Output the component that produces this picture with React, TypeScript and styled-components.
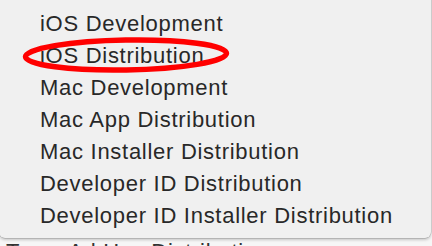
import React from "react";
import styled, { createGlobalStyle } from "styled-components";

const Global = createGlobalStyle`
  html, body { margin: 0; padding: 0; background: #f6f6f6; overflow: hidden; }
  body { width: 432px; height: 246px; font-family: "Liberation Sans", Arial, sans-serif; }
`;

const Page = styled.div`
  position: relative;
  width: 432px;
  height: 246px;
  overflow: hidden;
`;

const Underlay = styled.div`
  padding: 240px 0 0 6px;
  font-size: 22px;
  letter-spacing: 0.7px;
  color: #333;
  line-height: 24px;
  white-space: nowrap;
`;

const Menu = styled.div`
  position: absolute;
  top: -8px;
  left: -1px;
  width: 432px;
  height: 246px;
  box-sizing: border-box;
  background: #f0f0f0;
  border-radius: 6px;
  box-shadow: 0 0 0 0.5px rgba(0,0,0,0.22), 0 2px 3px rgba(0,0,0,0.2);
  padding: 16px 0 0 41px;
  display: flex;
  flex-direction: column;
`;

const Item = styled.div`
  height: 32px;
  line-height: 32px;
  font-size: 22px;
  letter-spacing: 0.72px;
  color: #282828;
  white-space: nowrap;
`;

const Circle = styled.svg`
  position: absolute;
  left: 0;
  top: 0;
  pointer-events: none;
`;

const items = [
  "iOS Development",
  "iOS Distribution",
  "Mac Development",
  "Mac App Distribution",
  "Mac Installer Distribution",
  "Developer ID Distribution",
  "Developer ID Installer Distribution",
];

export default function App() {
  return (
    <Page>
      <Global />
      <Underlay>Team Ad Hoc Distribution</Underlay>
      <Menu>
        {items.map((t) => (
          <Item key={t}>{t}</Item>
        ))}
      </Menu>
      <Circle width="432" height="246" viewBox="0 0 432 246">
        <ellipse cx="126" cy="55" rx="100.5" ry="15" fill="none" stroke="#f00" strokeWidth="5.5" transform="rotate(-1 126 55)" />
      </Circle>
    </Page>
  );
}
